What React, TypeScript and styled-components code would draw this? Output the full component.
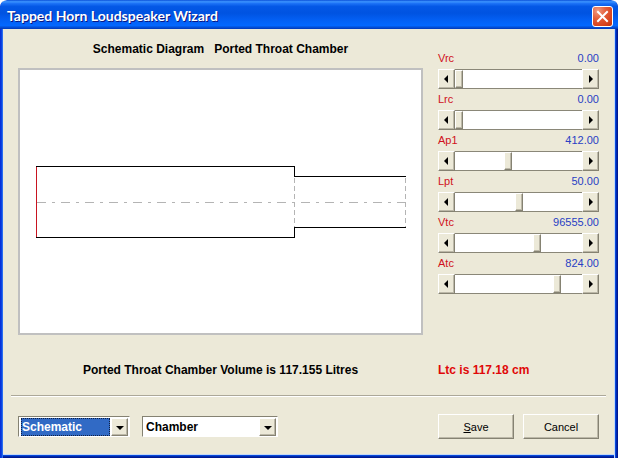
import React, { useId, useState } from "react";
import styled, { createGlobalStyle, css } from "styled-components";

const GlobalStyle = createGlobalStyle`
  *, *::before, *::after { box-sizing: border-box; }
  body {
    margin: 0;
    background: #ffffff;
    font-family: "Liberation Sans", Arial, sans-serif;
    font-size: 11px;
    color: #000000;
  }
  button, select, input { font: inherit; color: inherit; margin: 0; }
`;

const raised = css`
  border: 1px solid;
  border-color: #ffffff #858272 #858272 #ffffff;
  box-shadow: inset -1px -1px 0 #bcb8a8;
`;

const Dialog = styled.main`
  margin-right: 3px;
  padding: 0 4px 4px 3px;
  border-radius: 7px 7px 0 0;
  overflow: hidden;
  background:
    linear-gradient(to right, #0831d9 0 1px, #0a44e0 1px 2px, #2a6cf0 2px 3px, transparent 3px) left / 3px 100% no-repeat,
    linear-gradient(to right, #c4d8f4 0 1px, #0648dc 1px 2px, #0028b0 2px 3px, #001890 3px) right / 4px 100% no-repeat,
    linear-gradient(to bottom, #c4d8f4 0 1px, #0648dc 1px 2px, #0028a8 2px 3px, #001890 3px) bottom / 100% 4px no-repeat;
`;

const TitleBar = styled.header`
  display: flex;
  align-items: center;
  justify-content: space-between;
  height: 29px;
  margin: 0 -4px 0 -3px;
  padding: 3px 5px 0 7px;
  border-radius: 7px 7px 0 0;
  background: linear-gradient(
    to bottom,
    #0a50d8 0%, #3c94ff 6%, #1c72f6 12%, #0458e6 22%, #0053e1 45%,
    #0360f4 70%, #0368ff 88%, #0450d8 94%, #0038b8 100%
  );
`;

const WindowTitle = styled.h1`
  margin: 0;
  font-family: Lato, "Liberation Sans", sans-serif;
  font-size: 14px;
  font-weight: 700;
  line-height: 20px;
  color: #ffffff;
  text-shadow: 1px 1px 0 #0a1883;
`;

const CloseButton = styled.button`
  display: grid;
  place-items: center;
  width: 21px;
  height: 21px;
  padding: 0;
  border: 1px solid #ffffff;
  border-radius: 3px;
  background: radial-gradient(circle at 25% 20%, #f09a80 0%, #e25c38 40%, #d8421c 75%, #b8340f 100%);
`;

const Client = styled.div`
  background: #ece9d8;
  padding-bottom: 15px;
`;

const Workspace = styled.div`
  display: grid;
  grid-template-columns: minmax(0, 1fr) 161px;
  column-gap: 15px;
  padding: 10px 15px 0;
`;

const Heading = styled.h2`
  margin: 0 0 9px;
  font-size: 12px;
  font-weight: 700;
  line-height: 20px;
  text-align: center;
  white-space: pre;
`;

const Canvas = styled.div`
  border: 2px solid #c0c0c0;
  background: #ffffff;
  svg { display: block; width: 100%; height: auto; }
`;

const Sliders = styled.div`
  padding-top: 9px;
`;

const SliderHead = styled.div`
  display: flex;
  justify-content: space-between;
  line-height: 21px;
`;

const ParamName = styled.label`
  color: #d01020;
`;

const ParamValue = styled.output`
  color: #2840c4;
`;

const SliderBar = styled.div`
  display: flex;
  height: 20px;
`;

const StepButton = styled.button`
  display: grid;
  place-items: center;
  width: 17px;
  padding: 0;
  background: #ece9d8;
  ${raised}
`;

const Range = styled.input`
  appearance: none;
  flex: 1;
  min-width: 0;
  height: 20px;
  border: solid #8a8778;
  border-width: 1px 0;
  background: #ffffff;

  &::-webkit-slider-thumb {
    appearance: none;
    width: 8px;
    height: 18px;
    background: #ece9d8;
    ${raised}
  }
`;

const Readout = styled.p<{ $alert?: boolean }>`
  margin: 25px 0 0;
  font-size: 12px;
  font-weight: 700;
  line-height: 20px;
  text-align: ${(p) => (p.$alert ? "left" : "center")};
  color: ${(p) => (p.$alert ? "#e00808" : "#000000")};
`;

const Divider = styled.hr`
  height: 2px;
  margin: 15px 8px 17px;
  border: solid;
  border-width: 1px 0;
  border-color: #aca899 transparent #ffffff;
`;

const Footer = styled.footer`
  display: flex;
  align-items: center;
  padding: 0 15px;
  gap: 12px;
`;

const Combo = styled.div<{ $wide?: boolean }>`
  display: grid;
  grid-template-columns: minmax(0, 1fr) 17px;
  width: ${(p) => (p.$wide ? 136 : 112)}px;
  height: 21px;
  padding: 1px;
  border: 1px solid;
  border-color: #858272 #ffffff #ffffff #858272;
  background: #ffffff;
`;

const ComboHighlight = styled.span`
  grid-area: 1 / 1;
  margin: 0 1px;
  border: 1px dotted #102040;
  background: #316ac5;
`;

const ComboSelect = styled.select<{ $active?: boolean }>`
  appearance: none;
  grid-area: 1 / 1 / 2 / 3;
  min-width: 0;
  height: 18px;
  padding: 1px 17px 0 2px;
  border: 0;
  outline: 0;
  background: transparent;
  font-size: 12px;
  font-weight: 700;
  line-height: 17px;
  color: ${(p) => (p.$active ? "#ffffff" : "#000000")};
  option { color: #000000; }
`;

const ComboArrow = styled.span`
  grid-area: 1 / 2;
  display: grid;
  place-items: center;
  background: #ece9d8;
  pointer-events: none;
  ${raised}
`;

const Actions = styled.div`
  display: flex;
  gap: 9px;
  margin-left: auto;
`;

const PushButton = styled.button`
  width: 76px;
  height: 25px;
  padding: 0;
  background: #ece9d8;
  ${raised}
`;

type Direction = "left" | "right" | "down";

const arrows: Record<Direction, { w: number; h: number; points: string }> = {
  left: { w: 5, h: 8, points: "4,0 4,8 0,4" },
  right: { w: 5, h: 8, points: "1,0 1,8 5,4" },
  down: { w: 8, h: 5, points: "0,1 8,1 4,5" },
};

function Arrow({ to }: { to: Direction }) {
  const { w, h, points } = arrows[to];
  return (
    <svg width={w} height={h} viewBox={`0 0 ${w} ${h}`} aria-hidden="true">
      <polygon points={points} fill="#000000" />
    </svg>
  );
}

interface Parameter {
  name: string;
  value: number;
  max: number;
}

const parameters: Parameter[] = [
  { name: "Vrc", value: 0, max: 1000 },
  { name: "Lrc", value: 0, max: 1000 },
  { name: "Ap1", value: 412, max: 1000 },
  { name: "Lpt", value: 50, max: 100 },
  { name: "Vtc", value: 96555, max: 147000 },
  { name: "Atc", value: 824, max: 1000 },
];

function ParameterSlider({ name, value: initial, max }: Parameter) {
  const id = useId();
  const [value, setValue] = useState(initial);
  const step = (delta: number) => setValue((v) => Math.min(max, Math.max(0, v + delta)));
  return (
    <div>
      <SliderHead>
        <ParamName htmlFor={id}>{name}</ParamName>
        <ParamValue htmlFor={id}>{value.toFixed(2)}</ParamValue>
      </SliderHead>
      <SliderBar>
        <StepButton type="button" aria-label={`Decrease ${name}`} onClick={() => step(-1)}>
          <Arrow to="left" />
        </StepButton>
        <Range
          id={id}
          type="range"
          min={0}
          max={max}
          value={value}
          onChange={(e) => setValue(Number(e.target.value))}
        />
        <StepButton type="button" aria-label={`Increase ${name}`} onClick={() => step(1)}>
          <Arrow to="right" />
        </StepButton>
      </SliderBar>
    </div>
  );
}

function ChamberDiagram() {
  return (
    <svg viewBox="0 0 401 263" fill="none" shapeRendering="crispEdges" role="img" aria-label="Ported throat chamber">
      <path d="M17 132.5H386" stroke="#b4b4b4" strokeDasharray="9 6 3 6" />
      <path d="M274.5 108V157M385.5 108V157" stroke="#b4b4b4" strokeDasharray="5 3" />
      <path d="M16 96.5H274.5V106.5H386M16 167.5H274.5V157.5H386" stroke="#000000" />
      <path d="M16.5 97V167" stroke="#c81420" />
    </svg>
  );
}

interface DropDownProps {
  label: string;
  options: string[];
  active?: boolean;
  wide?: boolean;
}

function DropDown({ label, options, active, wide }: DropDownProps) {
  return (
    <Combo $wide={wide}>
      {active && <ComboHighlight />}
      <ComboSelect aria-label={label} $active={active} defaultValue={options[0]}>
        {options.map((o) => (
          <option key={o}>{o}</option>
        ))}
      </ComboSelect>
      <ComboArrow>
        <Arrow to="down" />
      </ComboArrow>
    </Combo>
  );
}

export default function App() {
  return (
    <>
      <GlobalStyle />
      <Dialog>
        <TitleBar>
          <WindowTitle>Tapped Horn Loudspeaker Wizard</WindowTitle>
          <CloseButton type="button" aria-label="Close">
            <svg width="13" height="13" viewBox="0 0 13 13" aria-hidden="true">
              <path d="M2 2L11 11M11 2L2 11" stroke="#ffffff" strokeWidth="2" strokeLinecap="square" />
            </svg>
          </CloseButton>
        </TitleBar>
        <Client>
          <Workspace>
            <section>
              <Heading>{"Schematic Diagram   Ported Throat Chamber"}</Heading>
              <Canvas>
                <ChamberDiagram />
              </Canvas>
            </section>
            <Sliders>
              {parameters.map((p) => (
                <ParameterSlider key={p.name} {...p} />
              ))}
            </Sliders>
            <Readout>Ported Throat Chamber Volume is 117.155 Litres</Readout>
            <Readout $alert>Ltc is 117.18 cm</Readout>
          </Workspace>
          <Divider />
          <Footer>
            <DropDown label="View" options={["Schematic"]} active />
            <DropDown label="Section" options={["Chamber"]} wide />
            <Actions>
              <PushButton type="button">
                <u>S</u>ave
              </PushButton>
              <PushButton type="button">Cancel</PushButton>
            </Actions>
          </Footer>
        </Client>
      </Dialog>
    </>
  );
}
